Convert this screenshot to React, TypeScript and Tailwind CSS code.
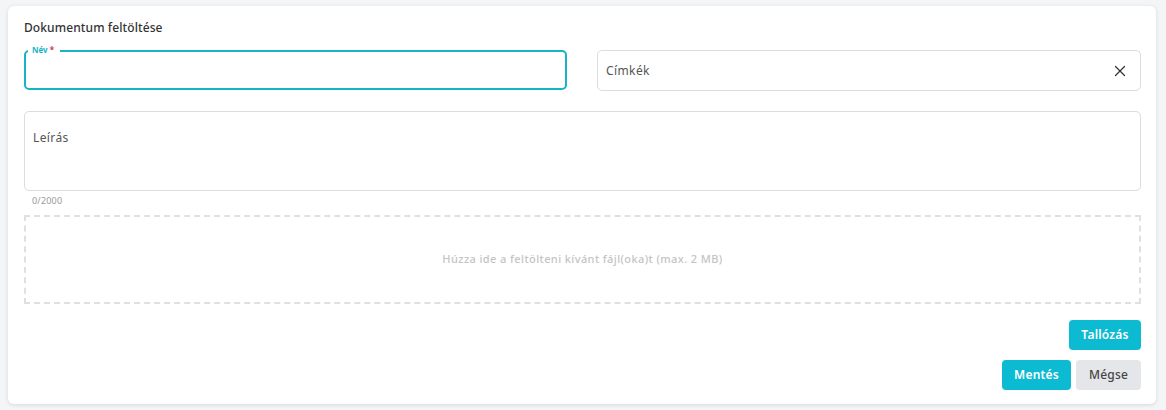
import React from "react";
import { X } from "lucide-react";

const font = { fontFamily: '"Noto Sans", "Open Sans", sans-serif' };

export default function App() {
  return (
    <div className="w-[1166px] h-[410px] bg-[#f4f5f7] pt-[6px] pl-[8px]" style={font}>
      <div className="w-[1148px] h-[398px] bg-white rounded-[6px] shadow-[0_1px_4px_rgba(0,0,0,0.12)] px-[16px] pt-[14px] flex flex-col">
        <div className="text-[12px] leading-[16px] font-medium text-[#333] tracking-[0.1px]">Dokumentum feltöltése</div>

        <div className="mt-[14px] grid grid-cols-[543px_544px] gap-[30px]">
          <div className="relative h-[40px] rounded-[5px] border-2 border-[#16b4c6]">
            <span className="absolute left-[2px] top-[-7px] bg-white pl-[4px] pr-[6px] text-[8px] leading-[10px] font-bold text-[#16b4c6]">
              Név <span className="text-[#e0245e]">*</span>
            </span>
          </div>
          <div className="h-[41px] rounded-[5px] border border-[#dcdcdc] flex items-center justify-between pl-[8px] pr-[11px]">
            <span className="text-[12px] tracking-[0.4px] text-[#555]">Címkék</span>
            <X size={18} strokeWidth={1.6} className="text-[#333]" />
          </div>
        </div>

        <div className="mt-[20px] h-[80px] rounded-[5px] border border-[#dcdcdc] pl-[8px] pt-[12px] w-[1117px]">
          <span className="text-[12px] leading-[16px] tracking-[0.4px] text-[#555]">Leírás</span>
        </div>
        <div className="mt-[4px] pl-[8px] text-[9px] leading-[12px] tracking-[0.2px] text-[#9a9a9a]">0/2000</div>

        <div className="mt-[8px] h-[89px] w-[1117px] border-2 border-dashed border-[#e0e0e0] flex items-center justify-center">
          <span className="text-[11px] font-medium tracking-[0.4px] text-[#c4c4c4]">Húzza ide a feltölteni kívánt fájl(oka)t (max. 2 MB)</span>
        </div>

        <div className="mt-[16px] w-[1117px] flex justify-end">
          <button className="h-[30px] w-[72px] rounded-[4px] bg-[#0cbad2] text-white text-[12px] font-semibold tracking-[0.2px]">Tallózás</button>
        </div>
        <div className="mt-[10px] w-[1117px] flex justify-end gap-[5px]">
          <button className="h-[30px] w-[69px] rounded-[4px] bg-[#0cbad2] text-white text-[12px] font-semibold tracking-[0.2px]">Mentés</button>
          <button className="h-[30px] w-[65px] rounded-[4px] bg-[#e4e6e9] text-[#444] text-[12px] font-medium tracking-[0.2px]">Mégse</button>
        </div>
      </div>
    </div>
  );
}
